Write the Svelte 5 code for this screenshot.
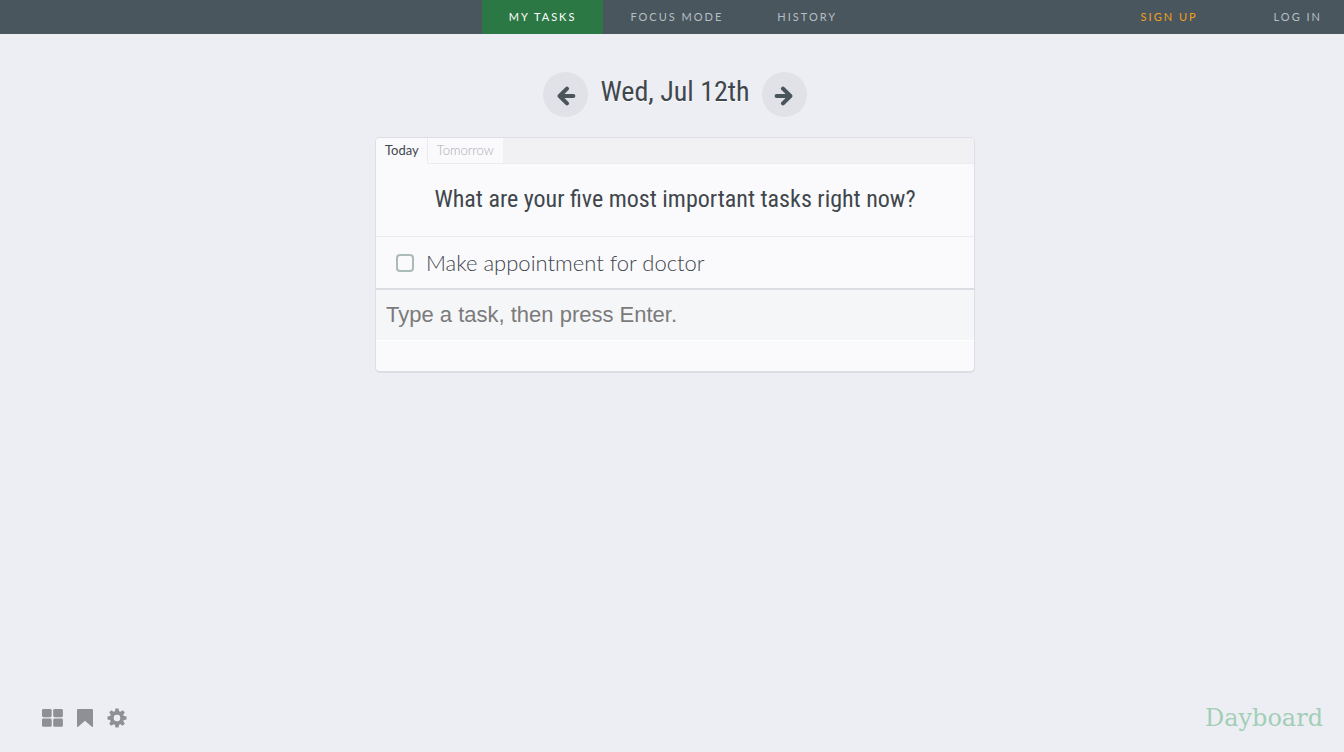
<script>
  let done = $state(false);
  let draft = $state('');
  const views = ['My Tasks', 'Focus Mode', 'History'];
</script>

<div class="page">
  <header>
    <nav class="views">
      {#each views as view, i}
        <a href="#{i}" class:active={i === 0}>{view}</a>
      {/each}
    </nav>
    <nav class="account">
      <a href="#signup" class="signup">Sign up</a>
      <a href="#login">Log in</a>
    </nav>
  </header>

  <main>
    <div class="date">
      <button class="step" aria-label="Previous day">
        <svg width="20" height="20" viewBox="0 0 20 20"><path d="M11 2.600 3.600 10l7.400 7.400M4 10H17.400" /></svg>
      </button>
      <h1>Wed, Jul 12th</h1>
      <button class="step" aria-label="Next day">
        <svg width="20" height="20" viewBox="0 0 20 20"><path d="M9 2.600 16.400 10l-7.400 7.400M16 10H2.600" /></svg>
      </button>
    </div>

    <section class="card">
      <div class="tabs">
        <button class="tab current">Today</button>
        <button class="tab">Tomorrow</button>
      </div>
      <h2>What are your five most important tasks right now?</h2>
      <label class="task">
        <input type="checkbox" bind:checked={done} />
        <span>Make appointment for doctor</span>
      </label>
      <input class="entry" type="text" aria-label="New task" placeholder="Type a task, then press Enter." bind:value={draft} />
      <div class="tail"></div>
    </section>
  </main>

  <footer>
    <div class="tools">
      <button aria-label="Boards">
        <svg width="21" height="18" viewBox="0 0 21 18"><rect width="9.700" height="8.200" rx="1.400" /><rect x="11.200" width="9.700" height="8.200" rx="1.400" /><rect y="9.600" width="9.700" height="8.200" rx="1.400" /><rect x="11.200" y="9.600" width="9.700" height="8.200" rx="1.400" /></svg>
      </button>
      <button aria-label="Bookmarks">
        <svg width="16" height="18" viewBox="0 0 16 18"><path d="M1.500 0h13A1.400 1.400 0 0 1 16 1.500V17q0 1.400-1.200.8L8 11.700 1.200 17.800Q0 18.400 0 17V1.500A1.400 1.400 0 0 1 1.500 0z" /></svg>
      </button>
      <button aria-label="Settings">
        <svg width="20" height="20" viewBox="-10 -10 20 20">
          {#each [0, 45, 90, 135] as angle}
            <path transform="rotate({angle})" d="M-1.500-9.500h3L2.300-6v2.400h-4.600V-6zM-2.300 3.600h4.600V6L1.500 9.500h-3L-2.300 6z" />
          {/each}
          <circle class="ring" r="5.200" />
        </svg>
      </button>
    </div>
    <a class="brand" href="#home">Dayboard</a>
  </footer>
</div>

<style>
  :global(body) {
    margin: 0;
    background: #edeef4;
  }
  .page {
    min-height: 100vh;
    display: flex;
    flex-direction: column;
    font-family: Lato, sans-serif;
    color: #3f474d;
  }
  button {
    border: 0;
    padding: 0;
    background: none;
    font: inherit;
    color: inherit;
    cursor: pointer;
  }
  header {
    display: grid;
    grid-template-columns: 1fr auto 1fr;
    background: #4a565e;
    font-size: 11px;
    line-height: 34px;
    letter-spacing: 2px;
    text-transform: uppercase;
  }
  header a {
    color: #b4bfc3;
    text-decoration: none;
  }
  .views {
    grid-column: 2;
    display: flex;
    padding-left: 2px;
  }
  .views a {
    padding: 0 27px;
  }
  .views .active {
    background: #2b7845;
    color: #fff;
  }
  .account {
    display: flex;
    justify-content: flex-end;
    gap: 76px;
    padding-right: 22px;
  }
  .account .signup {
    color: #f0a01c;
  }
  main {
    flex: 1;
    display: flex;
    flex-direction: column;
    align-items: center;
    padding: 38px 0 38px 6px;
  }
  .date {
    display: flex;
    gap: 12px;
    margin-bottom: 20px;
  }
  h1,
  h2 {
    margin: 0;
    font-family: "Roboto Condensed", Roboto, sans-serif;
    font-weight: 400;
    line-height: 40px;
  }
  h1 {
    font-size: 28px;
    text-shadow: 0 1px 0 #fff;
  }
  .step {
    display: grid;
    place-items: center;
    width: 45px;
    height: 45px;
    border-radius: 50%;
    background: #e1e2e7;
  }
  .step svg {
    margin-top: 2px;
    fill: none;
    stroke: #4a545b;
    stroke-width: 4;
    stroke-linejoin: round;
    stroke-linecap: round;
  }
  .card {
    box-sizing: border-box;
    width: 100%;
    max-width: 600px;
    border: 1px solid #dcdde5;
    border-bottom-width: 2px;
    border-radius: 5px;
    background: #fafafc;
    overflow: hidden;
  }
  .tabs {
    display: flex;
    background: #f1f1f3;
    font-size: 13px;
    line-height: 25px;
    box-shadow: inset 0 -1px #ececef;
  }
  .tab {
    padding: 0 9px;
    background: #fafafc;
    border-bottom: 1px solid #ececef;
    font-weight: 300;
    color: #a9abb1;
  }
  .current {
    padding-right: 8px;
    border-right: 1px solid #ececef;
    border-bottom-color: #fafafc;
    font-weight: 400;
    color: #3f474d;
  }
  h2 {
    padding: 15px 0 17px;
    font-size: 24px;
    text-align: center;
    border-bottom: 1px solid #ebebee;
  }
  .task {
    display: flex;
    align-items: center;
    gap: 12px;
    padding: 0 20px;
    line-height: 51px;
    font-size: 22px;
    font-weight: 300;
    border-bottom: 2px solid #dcdde2;
  }
  .task input {
    appearance: none;
    box-sizing: border-box;
    width: 18px;
    height: 18px;
    margin: 0;
    border: 2px solid #a9bab7;
    border-radius: 4px;
  }
  .task input:checked {
    background: #a9bab7;
  }
  .entry {
    display: block;
    box-sizing: border-box;
    width: 100%;
    height: 50px;
    padding: 0 10px;
    border: 0;
    outline: 0;
    background: #f5f6f8;
    color: #3f474d;
    font-family: "Liberation Sans", Arial, sans-serif;
    font-size: 22px;
  }
  .entry::placeholder {
    color: #7b7b7b;
  }
  .tail {
    height: 30px;
    border-top: 1px solid #fff;
  }
  footer {
    display: flex;
    align-items: center;
    justify-content: space-between;
    padding: 0 21px 18px 42px;
  }
  .tools {
    display: flex;
    align-items: center;
    gap: 14px;
  }
  .tools svg {
    display: block;
    fill: #8e9095;
  }
  .tools .ring {
    fill: none;
    stroke: #8e9095;
    stroke-width: 3.600;
  }
  .brand {
    font-family: "DejaVu Serif", serif;
    font-size: 24px;
    line-height: 32px;
    color: #a3ceb6;
    text-decoration: none;
  }
</style>
